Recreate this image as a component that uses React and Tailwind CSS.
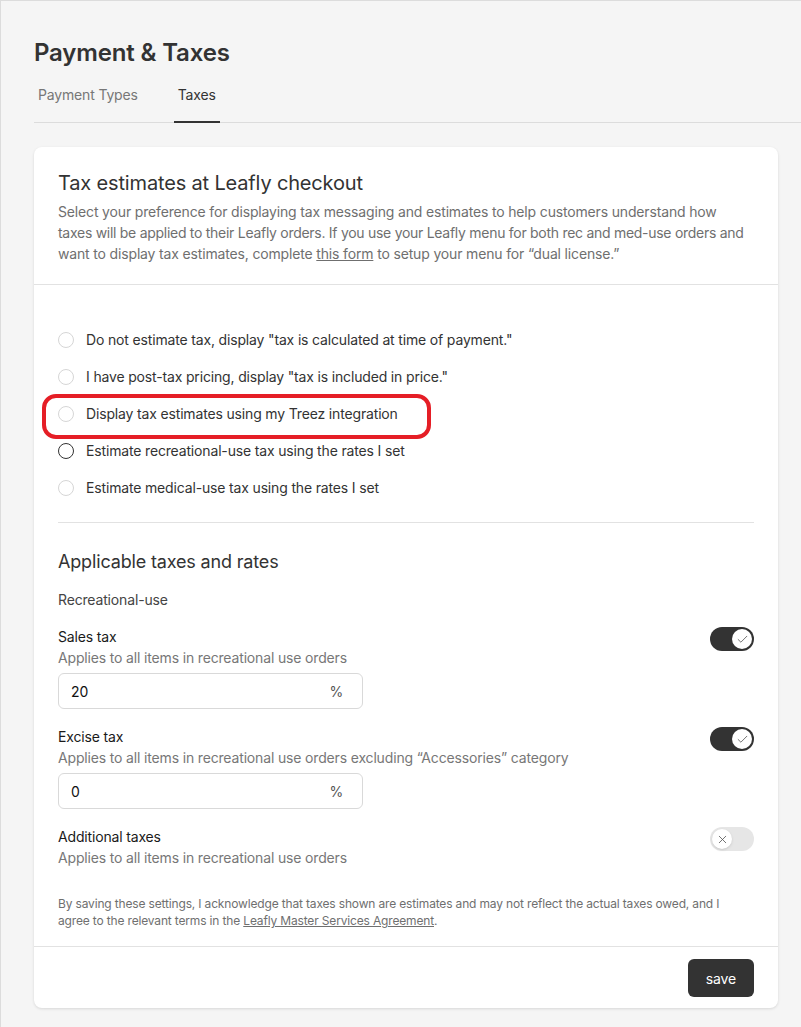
import { Check, X } from 'lucide-react';

function Radio({ label, dark }) {
  return (
    <label className="flex items-center h-[37px] cursor-pointer">
      <span
        className={`w-4 h-4 rounded-full border bg-white shrink-0 ${dark ? 'border-[#333]' : 'border-[#d6d6d6]'}`}
      />
      <span className="ml-[12px] text-[14px] text-[#333]">{label}</span>
    </label>
  );
}

function Toggle({ on }) {
  return on ? (
    <div className="mt-[1px] w-[44px] h-[24px] rounded-full bg-[#333] flex items-center justify-end px-[2px]">
      <div className="w-[20px] h-[20px] rounded-full bg-white flex items-center justify-center">
        <Check size={13} strokeWidth={1.5} className="text-[#555]" />
      </div>
    </div>
  ) : (
    <div className="mt-[1px] w-[44px] h-[24px] rounded-full bg-[#e6e6e6] flex items-center px-[2px]">
      <div className="w-[20px] h-[20px] rounded-full bg-white shadow-sm flex items-center justify-center">
        <X size={13} strokeWidth={1.5} className="text-[#555]" />
      </div>
    </div>
  );
}

function TaxRow({ title, desc, value, on, input = true, top = 'mt-[16px]' }) {
  return (
    <div className={top}>
      <div className="flex justify-between items-start">
        <div>
          <div className="text-[14px] leading-[21px] text-[#1a1a1a]">{title}</div>
          <div className="text-[14px] leading-[21px] text-[#777]">{desc}</div>
        </div>
        <Toggle on={on} />
      </div>
      {input && (
        <div className="mt-[5px] w-[305px] h-[36px] border border-[#d9d9d9] rounded-[6px] flex items-center justify-between pl-[12px] pr-[19px] text-[14px] text-[#111]">
          <span>{value}</span>
          <span className="text-[#555]">%</span>
        </div>
      )}
    </div>
  );
}

export default function App() {
  return (
    <div className="min-h-[1027px] bg-[#f5f5f5] border-l border-t border-[#dcdcdc] font-['Inter',sans-serif] tracking-[-0.01em] text-[#333]">
      <div className="pl-[33px] pt-[36px]">
        <h1 className="text-[24px] leading-[32px] font-semibold text-[#333]">Payment &amp; Taxes</h1>
        <div className="mt-[15px] flex border-b border-[#dcdcdc] text-[14px]">
          <div className="px-[4px] pb-[17px] text-[#777]">Payment Types</div>
          <div className="ml-[32px] px-[4px] pb-[15px] border-b-2 border-[#333] text-[#333] -mb-px">Taxes</div>
        </div>

        <div className="mt-[24px] mr-[23px] bg-white rounded-[8px] shadow-[0_1px_3px_rgba(0,0,0,0.12)]">
          <div className="px-[24px] pt-[22px] pb-[20px] border-b border-[#e2e2e2]">
            <h2 className="text-[20px] leading-[28px] text-[#333]">Tax estimates at Leafly checkout</h2>
            <p className="mt-[4px] text-[14px] leading-[21px] text-[#6f6f6f] whitespace-nowrap">
              Select your preference for displaying tax messaging and estimates to help customers understand how
              <br />
              <span className="tracking-[-0.02em]">
                taxes will be applied to their Leafly orders. If you use your Leafly menu for both rec and med-use orders and
              </span>
              <br />
              want to display tax estimates, complete <span className="underline">this form</span> to setup your menu for “dual license.”
            </p>
          </div>

          <div className="px-[24px]">
            <div className="relative pt-[36px] pb-[16px] border-b border-[#e2e2e2]">
              <Radio label={'Do not estimate tax, display "tax is calculated at time of payment."'} />
              <Radio label={'I have post-tax pricing, display "tax is included in price."'} />
              <Radio label="Display tax estimates using my Treez integration" />
              <Radio label="Estimate recreational-use tax using the rates I set" dark />
              <Radio label="Estimate medical-use tax using the rates I set" />
              <div className="absolute left-[-16px] top-[109px] w-[389px] h-[45px] border-[4px] border-[#e51e26] rounded-[14px] pointer-events-none" />
            </div>

            <h3 className="mt-[26px] text-[18px] leading-[26px] text-[#333]">Applicable taxes and rates</h3>
            <div className="mt-[14px] text-[14px] leading-[21px] text-[#444]">Recreational-use</div>

            <TaxRow title="Sales tax" desc="Applies to all items in recreational use orders" value="20" on />
            <TaxRow top="mt-[17px]" title="Excise tax" desc="Applies to all items in recreational use orders excluding “Accessories” category" value="0" on />
            <TaxRow top="mt-[17px]" title="Additional taxes" desc="Applies to all items in recreational use orders" on={false} input={false} />

            <p className="mt-[27px] pb-[17px] text-[12px] leading-[17px] text-[#6f6f6f] whitespace-nowrap">
              By saving these settings, I acknowledge that taxes shown are estimates and may not reflect the actual taxes owed, and I
              <br />
              agree to the relevant terms in the <span className="underline">Leafly Master Services Agreement</span>.
            </p>
          </div>

          <div className="border-t border-[#e2e2e2] px-[24px] pt-[12px] pb-[11px] flex justify-end">
            <button className="h-[38px] px-[18px] bg-[#333] text-white text-[14px] rounded-[6px]">save</button>
          </div>
        </div>
      </div>
    </div>
  );
}
